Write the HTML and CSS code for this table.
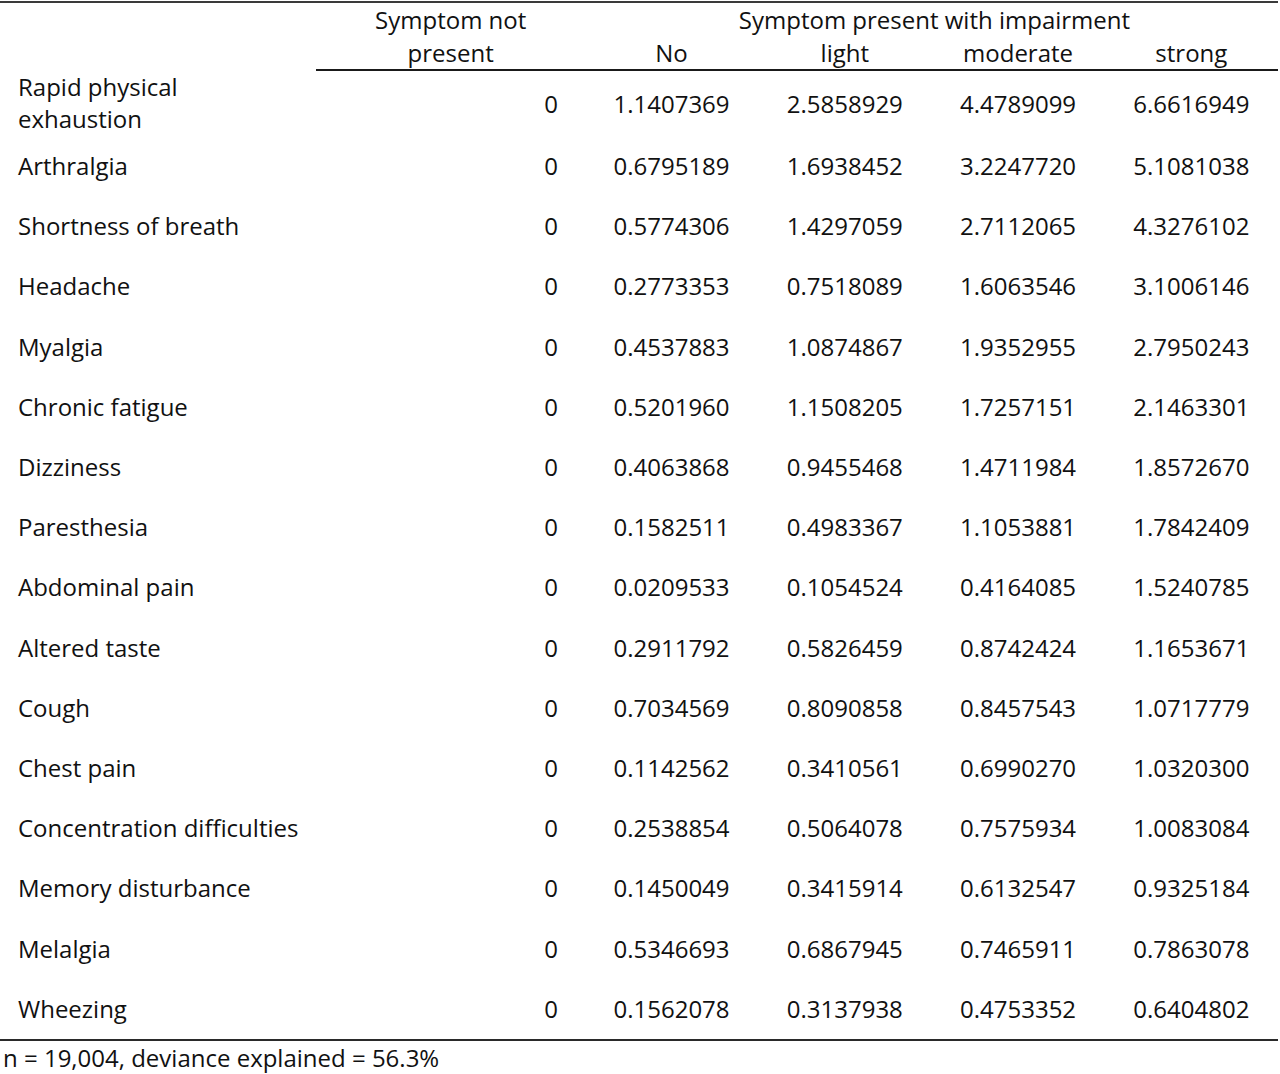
FILE: index.html
```html
<!DOCTYPE html>
<html lang="en">
<head>
<meta charset="utf-8">
<title>Symptom table</title>
<link rel="stylesheet" href="styles.css">
</head>
<body>
<div class="wrap">
<table class="tbl">
  <colgroup>
    <col class="c-label">
    <col class="c-zero">
    <col class="c-num">
    <col class="c-num">
    <col class="c-num">
    <col class="c-num">
  </colgroup>
  <thead>
    <tr class="h1">
      <th class="blank"></th>
      <th class="zero-h">Symptom not</th>
      <th colspan="4" class="group-h">Symptom present with impairment</th>
    </tr>
    <tr class="h2">
      <th class="blank"></th>
      <th class="zero-h ruled">present</th>
      <th class="ruled">No</th>
      <th class="ruled">light</th>
      <th class="ruled">moderate</th>
      <th class="ruled">strong</th>
    </tr>
  </thead>
  <tbody>
    <tr class="first"><td class="lbl">Rapid physical<br>exhaustion</td><td class="z">0</td><td>1.1407369</td><td>2.5858929</td><td>4.4789099</td><td>6.6616949</td></tr>
    <tr><td class="lbl">Arthralgia</td><td class="z">0</td><td>0.6795189</td><td>1.6938452</td><td>3.2247720</td><td>5.1081038</td></tr>
    <tr><td class="lbl">Shortness of breath</td><td class="z">0</td><td>0.5774306</td><td>1.4297059</td><td>2.7112065</td><td>4.3276102</td></tr>
    <tr><td class="lbl">Headache</td><td class="z">0</td><td>0.2773353</td><td>0.7518089</td><td>1.6063546</td><td>3.1006146</td></tr>
    <tr><td class="lbl">Myalgia</td><td class="z">0</td><td>0.4537883</td><td>1.0874867</td><td>1.9352955</td><td>2.7950243</td></tr>
    <tr><td class="lbl">Chronic fatigue</td><td class="z">0</td><td>0.5201960</td><td>1.1508205</td><td>1.7257151</td><td>2.1463301</td></tr>
    <tr><td class="lbl">Dizziness</td><td class="z">0</td><td>0.4063868</td><td>0.9455468</td><td>1.4711984</td><td>1.8572670</td></tr>
    <tr><td class="lbl">Paresthesia</td><td class="z">0</td><td>0.1582511</td><td>0.4983367</td><td>1.1053881</td><td>1.7842409</td></tr>
    <tr><td class="lbl">Abdominal pain</td><td class="z">0</td><td>0.0209533</td><td>0.1054524</td><td>0.4164085</td><td>1.5240785</td></tr>
    <tr><td class="lbl">Altered taste</td><td class="z">0</td><td>0.2911792</td><td>0.5826459</td><td>0.8742424</td><td>1.1653671</td></tr>
    <tr><td class="lbl">Cough</td><td class="z">0</td><td>0.7034569</td><td>0.8090858</td><td>0.8457543</td><td>1.0717779</td></tr>
    <tr><td class="lbl">Chest pain</td><td class="z">0</td><td>0.1142562</td><td>0.3410561</td><td>0.6990270</td><td>1.0320300</td></tr>
    <tr><td class="lbl">Concentration difficulties</td><td class="z">0</td><td>0.2538854</td><td>0.5064078</td><td>0.7575934</td><td>1.0083084</td></tr>
    <tr><td class="lbl">Memory disturbance</td><td class="z">0</td><td>0.1450049</td><td>0.3415914</td><td>0.6132547</td><td>0.9325184</td></tr>
    <tr><td class="lbl">Melalgia</td><td class="z">0</td><td>0.5346693</td><td>0.6867945</td><td>0.7465911</td><td>0.7863078</td></tr>
    <tr><td class="lbl">Wheezing</td><td class="z">0</td><td>0.1562078</td><td>0.3137938</td><td>0.4753352</td><td>0.6404802</td></tr>
  </tbody>
</table>
<p class="note">n = 19,004, deviance explained = 56.3%</p>
</div>
</body>
</html>
```
FILE: styles.css
```css
html, body {
  margin: 0;
  padding: 0;
  background: #ffffff;
}
body {
  font-family: "Open Sans", "Noto Sans", "Liberation Sans", sans-serif;
  font-size: 24px;
  color: #111111;
}
.wrap {
  width: 1278px;
  padding-top: 1px;
}
.tbl {
  width: 1278px;
  border-collapse: collapse;
  table-layout: fixed;
  border-top: 2px solid #3a3a3a;
  border-bottom: 2px solid #2a2a2a;
}
.c-label { width: 316px; }
.c-zero { width: 268px; }
.c-num { width: 173px; }
th {
  font-weight: normal;
  line-height: 33px;
  padding: 0;
  text-align: center;
  vertical-align: middle;
  white-space: nowrap;
}
.h1 th { height: 33px; }
.h2 th { height: 32px; }
.group-h { padding-left: 6px; }
.ruled { border-bottom: 2px solid #1a1a1a; }
td {
  line-height: 32px;
  padding-top: 14.1px;
  padding-bottom: 14.1px;
  text-align: center;
  vertical-align: middle;
  white-space: nowrap;
}
tr.first td {
  padding-top: 1px;
  padding-bottom: 1px;
}
td.lbl {
  text-align: left;
  padding-left: 18px;
}
td.z {
  text-align: right;
  padding-right: 27px;
}
.note {
  margin: 0;
  padding-left: 3px;
  line-height: 34px;
}
```
